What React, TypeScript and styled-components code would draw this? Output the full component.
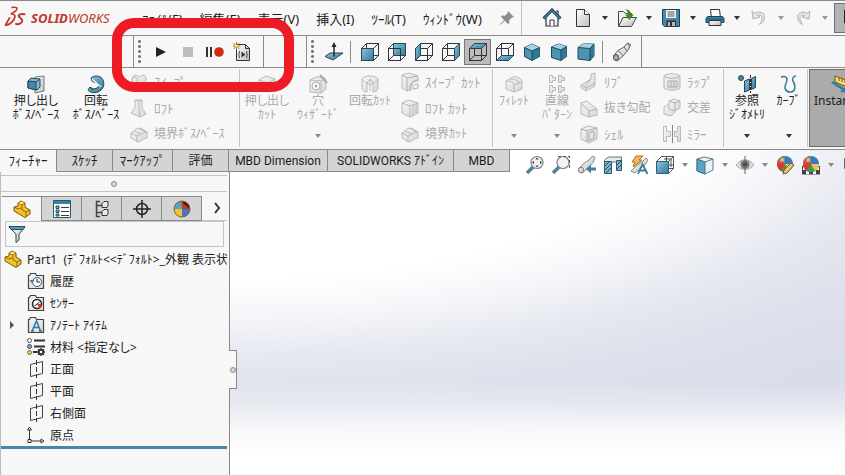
import React from "react";
import styled, { createGlobalStyle } from "styled-components";

const Global = createGlobalStyle`
  * { box-sizing: border-box; }
  body {
    margin: 0;
    background: #f7f7f7;
    color: #1c1c1c;
    font-family: "Noto Sans", "Noto Sans CJK JP", sans-serif;
    font-size: 12px;
    overflow: hidden;
  }
  button, input {
    font: inherit;
    color: inherit;
    border: 0;
    padding: 0;
    margin: 0;
    background: none;
  }
  svg { display: block; flex: none; }
`;

/* ---------- icons ---------- */

const OUT = "#2f4450";
const BLUE = "url(#gBlue)";
const GREY = "url(#gGrey)";

const Defs = styled.svg`
  position: absolute;
  width: 0;
  height: 0;
`;

const IconDefs = () => (
  <Defs aria-hidden="true">
    <defs>
      <linearGradient id="gBlue" x1="0" y1="0" x2="1" y2="1">
        <stop offset="0" stopColor="#8cc3da" />
        <stop offset="1" stopColor="#2f7a9d" />
      </linearGradient>
      <linearGradient id="gGrey" x1="0" y1="0" x2="1" y2="1">
        <stop offset="0" stopColor="#ffffff" />
        <stop offset="1" stopColor="#bdbdbd" />
      </linearGradient>
      <linearGradient id="gPale" x1="0" y1="0" x2="1" y2="1">
        <stop offset="0" stopColor="#f6f6f6" />
        <stop offset="1" stopColor="#d8d8d8" />
      </linearGradient>
    </defs>
  </Defs>
);

type IconProps = { w?: number; h?: number; children: React.ReactNode };
const Icon = ({ w = 20, h = 20, children }: IconProps) => (
  <svg width={w} height={h} viewBox={`0 0 ${w} ${h}`} fill="none" aria-hidden="true">
    {children}
  </svg>
);

const Caret = ({ color = "#333" }: { color?: string }) => (
  <Icon w={6} h={4}>
    <path d="M0 0h6L3 4z" fill={color} />
  </Icon>
);

const LogoMark = () => (
  <svg width="22" height="24" viewBox="0 0 22 24" fill="none" stroke="#c0362c" strokeLinecap="round" strokeLinejoin="round" aria-hidden="true">
    <path d="M8 1.500c2.500-.6 5.500-.2 5 1.300C12.500 4.500 10 6.500 7.500 7.500" strokeWidth="1.500" />
    <path d="M7.500 7.800c3.500.2 4.200 2.500 2.700 5.200C8.500 16 5 18.800 1.500 19.200L5.500 12" strokeWidth="1.700" />
    <path d="M20.500 8.300c-3.500-.8-6.200.2-5.700 2 .4 1.400 3.600 2.200 3.400 4.700-.3 2.600-3.700 3.500-6.200 3" strokeWidth="2" />
  </svg>
);

const PinIcon = () => (
  <Icon w={16} h={16}>
    <path d="M9 1l6 6-2 .5-2.800 2.700.1 3-1.300.8-3.300-3.300L2 14.500 1 15l.5-1L5 10 2 6.800l1-1.200 3 .1L8.700 3z" fill="#8d8d8d" />
  </Icon>
);
const HomeIcon = () => (
  <Icon>
    <path d="M4 9v9h12V9l-6-6z" fill="#f4f4f4" stroke="#333" strokeWidth="1.200" />
    <path d="M8 18v-6h4v6" stroke="#333" fill="#fff" />
    <path d="M14 3h2v4" stroke="#333" strokeWidth="1.200" />
    <path d="M1.500 10.500L10 2l8.500 8.500" stroke="#17445a" strokeWidth="3" />
    <path d="M2 10.300L10 2.300l8 8" stroke="#6fb0c8" strokeWidth="1" />
  </Icon>
);
const NewIcon = () => (
  <Icon>
    <path d="M3.500 1.500h8l5 5v12h-13z" fill={GREY} stroke="#333" />
    <path d="M11.500 1.500v5h5" fill="#fff" stroke="#333" />
  </Icon>
);
const OpenIcon = () => (
  <Icon w={22}>
    <path d="M2.500 18V3.500h5l2 2h6V10" fill="#eee" stroke="#444" />
    <path d="M2.500 18.500L7 9.500h13.500l-5 9z" fill={GREY} stroke="#444" />
    <path d="M9 1.500c4-.5 6 2 6 5h3L13.300 12 9 6.500h3C12 4 11 2.500 9 1.500z" fill="#3d8a1e" />
  </Icon>
);
const SaveIcon = () => (
  <Icon>
    <path d="M1.500 1.500h17v17h-15l-2-2z" fill="#4389a8" stroke="#1d4456" />
    <rect x="5" y="2" width="10" height="8" fill="#f4f4f4" />
    <path d="M6.500 4h7M6.500 6h7M6.500 8h7" stroke="#555" />
    <path d="M5.500 12.500h9.500v6H5.500z" fill="#333" />
    <path d="M7 14h2v4H7zM11 14h3v4h-3z" fill="#bbb" />
  </Icon>
);
const PrintIcon = () => (
  <Icon>
    <path d="M6.500 10L5.500 1.500h9l1 8.500" fill="#fff" stroke="#333" />
    <path d="M2.500 8.500h15l1.500 2v4H1v-4z" fill="#3a86a8" stroke="#16455b" />
    <path d="M4 12.500h12v5H4z" fill={GREY} stroke="#333" />
    <path d="M1 11h18" stroke="#17546e" />
  </Icon>
);
const UndoIcon = () => (
  <Icon w={18}>
    <path d="M2 3l1 8 7-2-2.700-1.600c4-1.400 6.200 2 3.700 6.600l-1.500 2.500c6-2.500 7.500-12-.5-12.500-1.500 0-3 .5-4.200 1.500z" fill="#e4e4e4" stroke="#b5b5b5" />
  </Icon>
);
const RedoIcon = () => (
  <Icon w={18}>
    <path d="M16 3l-1 8-7-2 2.700-1.600C6.700 6 4.500 9.400 7 14l1.500 2.500C2.500 14 1 4.500 9 4c1.500 0 3 .5 4.200 1.500z" fill="#e4e4e4" stroke="#b5b5b5" />
  </Icon>
);
const CursorIcon = () => (
  <Icon w={12}>
    <path d="M1.500 2v13l3.500-3 2 5 2-1-2-5h4z" fill="#fff" stroke="#222" />
  </Icon>
);

const PlayIcon = () => (<Icon w={12} h={12}><path d="M1 1l10 5-10 5z" fill="#222" /></Icon>);
const StopIcon = () => (<Icon w={12} h={12}><path d="M1 1h10v10H1z" fill="#bdbdbd" /></Icon>);
const PauseRecIcon = () => (
  <Icon w={20} h={12}>
    <path d="M2 1v10M6 1v10" stroke="#333" strokeWidth="2" />
    <circle cx="14" cy="6" r="4.800" fill="#cf2a10" />
  </Icon>
);
const ScriptIcon = () => (
  <Icon w={18}>
    <path d="M3.500 2.500h9l4 4v12h-13z" fill={GREY} stroke="#333" />
    <path d="M12.500 2.500v4h4" stroke="#333" />
    <path d="M7 9c-1.500 0 0 3.300-1.500 3.600C7 12.900 5.500 16 7 16M13 9c1.500 0 0 3.300 1.500 3.600C13 12.900 14.500 16 13 16" stroke="#333" />
    <path d="M8.500 9.500l4 3-4 3z" fill="#333" />
    <path d="M3.500 0v8M0 4h7.500M.8 1.200l5.400 5.600M6.200 1.200L.8 6.800" stroke="#9a6a1c" />
    <circle cx="3.500" cy="4" r="1.600" fill="#ffd98a" />
  </Icon>
);

const NormalToIcon = () => (
  <Icon>
    <path d="M1 14.500l5-3.500h13l-5 3.500-5 3.500z" fill={BLUE} stroke={OUT} />
    <path d="M10 14.500V4" stroke="#222" strokeWidth="1.500" />
    <path d="M7.500 5L10 0l2.500 5z" fill="#222" />
  </Icon>
);

const faces = {
  front: "M1.500 6.500h12v12h-12z",
  back: "M6.500 1.500h12v12h-12z",
  left: "M1.500 6.500l5-5v12l-5 5z",
  right: "M13.500 6.500l5-5v12l-5 5z",
  top: "M1.500 6.500l5-5h12l-5 5z",
  bottom: "M1.500 18.500l5-5h12l-5 5z",
};
const CubeIcon = ({ face }: { face: keyof typeof faces }) => (
  <Icon>
    <path d="M6.500 1.500h12v12h-12zM1.500 6.500l5-5M13.500 6.500l5-5M1.500 18.500l5-5M13.500 18.500l5-5M1.500 6.500h12v12h-12z" stroke="#333" />
    <path d={faces[face]} fill={BLUE} stroke="#24485a" />
    {face === "back" && <path d="M1.500 6.500h12v12h-12z" stroke="#333" />}
  </Icon>
);
const IsoIcon = () => (
  <Icon>
    <path d="M10 2l7.500 3.500v9L10 18.500l-7.500-4v-9z" fill="#4c94b4" stroke="#1d4759" />
    <path d="M2.500 5.500L10 2l7.500 3.500L10 9z" fill="#a5d3e4" />
    <path d="M10 9l7.500-3.500v9l-7.500 4z" fill="#2e7797" />
    <path d="M2.500 5.500L10 9l7.500-3.500M10 9v9" stroke="#1d4759" />
  </Icon>
);
const TrimetricIcon = () => (
  <Icon>
    <path d="M2.500 5l7-3 8 2.500v10l-5.500 4-9.500-3z" fill="#4c94b4" stroke="#1d4759" />
    <path d="M2.500 5l7-3 8 2.500-5.500 3.500z" fill="#a5d3e4" />
    <path d="M12 8l5.500-3.500v10l-5.500 4z" fill="#2e7797" />
    <path d="M2.500 5L12 8l5.500-3.500M12 8v10.500" stroke="#1d4759" />
  </Icon>
);
const DimetricIcon = () => (
  <Icon>
    <path d="M2 5.500L7 2h11v12l-4 4.500L2 17z" fill="#4c94b4" stroke="#1d4759" />
    <path d="M2 5.500L7 2h11l-4 4.500z" fill="#a5d3e4" />
    <path d="M14 6.500L18 2v12l-4 4.500z" fill="#2e7797" />
    <path d="M2 5.500l12 1L18 2M14 6.500v12" stroke="#1d4759" />
  </Icon>
);
const ScopeIcon = () => (
  <Icon>
    <path d="M1.500 14L6 8.500 12 5l3.500-4 3 1.500-2 5L12 13l-6.500 6z" fill={GREY} stroke="#666" />
    <path d="M12 5l3 4M6 8.500l5 5M15.500 1.500l2.500 3" stroke="#666" />
    <ellipse cx="4" cy="15.500" rx="2.500" ry="3" fill="#aaa" stroke="#444" />
  </Icon>
);

/* ribbon */
const ExtrudeIcon = () => (
  <Icon>
    <path d="M9 3l9-1v15l-9 2z" fill={GREY} stroke="#777" />
    <path d="M2 7l3-3 9 1v8l-3 3-9-2z" fill="#7db9d2" stroke={OUT} />
    <path d="M2 7l8 1v8l-8-2z" fill="#3f89aa" stroke={OUT} />
    <path d="M10 8l4-3" stroke={OUT} />
  </Icon>
);
const RevolveIcon = () => (
  <Icon>
    <path d="M5 4c3-3 10-3 12 2s0 10-5 12c-4 1.500-8 .5-10-2l2-3c3 2.500 7 2 8.500-.5S12 8 9 8.500L6 7z" fill={BLUE} stroke={OUT} />
    <path d="M6 5l9 8" stroke="#e8f4f8" strokeWidth="1.500" />
    <path d="M4 13l3 3.500" stroke={OUT} />
  </Icon>
);
const dim = { stroke: "#b9b9b9", fill: "url(#gPale)" };
const SweepIcon = () => (
  <Icon><path {...dim} d="M3 8c0-5 5-6 8-3 3-4 7-1 6 3-1 4-6 3-7 8-4 2-8 0-7-3 3-1 1-3 0-5z" /><circle cx="6" cy="8" r="3" {...dim} /></Icon>
);
const LoftIcon = () => (
  <Icon><path {...dim} d="M6 2h7v8l4 6-6 3-9-4 4-5z" /><path d="M6 2l4 1.500L13 2M10 3.500V11l1 8" stroke="#b9b9b9" /></Icon>
);
const BoundaryIcon = () => (
  <Icon><path {...dim} d="M2 9c3-1 4-5 8-5l3 1 5 3v6c-4 0-5 3-9 4l-7-4z" /><path d="M2 9l6 3c4-1 6-4 10-4M8 12v6M5 7l7 3M10 4l6 4" stroke="#b9b9b9" /></Icon>
);
const CutExtrudeIcon = () => (
  <Icon><path {...dim} d="M2 6l7-4 9 3v9l-7 4-9-3z" /><path d="M2 6l9 3 7-4M11 9v9M5 9l3 1v4l-3-1z" stroke="#b9b9b9" /></Icon>
);
const HoleIcon = () => (
  <Icon><path {...dim} d="M2 6l6-3h7l3 3v9l-5 4-11-1z" /><path d="M2 6l11 1 5-3M13 7v12" stroke="#b9b9b9" /><circle cx="8" cy="12" r="4" fill="#fff" stroke="#aaa" /><circle cx="8" cy="12" r="1.500" fill="#aaa" /><path d="M12 1l7 8" stroke="#aaa" strokeWidth="2" /></Icon>
);
const CutRevolveIcon = () => (
  <Icon><path {...dim} d="M2 5c3-4 13-4 16 0v10c-1 2-3 3-5 3V9l-3-4-3 4v9c-2 0-4-1-5-3z" /><path d="M7 9l3 2 3-2M10 5v6M10 11v6M2 5c1 2 3 3.500 5 4M18 5c-1 2-3 3.500-5 4" stroke="#b9b9b9" /></Icon>
);
const CutSweepIcon = () => (
  <Icon><path {...dim} d="M2 3l7-2 9 3v5c-5 0-7 4-7 9l-4 1-5-3z" /><path d="M2 3l5 3 11-2M7 6v13M10 18c-1-6 3-10 8-10M13 17c0-4 2-5 5-5v4z" stroke="#b0b0b0" /></Icon>
);
const CutLoftIcon = () => (
  <Icon><path {...dim} d="M2 5l7-3 9 3v10l-8 4-8-4z" /><path d="M2 5l8 3 8-3M10 8v11M13 7v10M16 6v9" stroke="#b9b9b9" /></Icon>
);
const FilletIcon = () => (
  <Icon><path {...dim} d="M2 7l7-4c4-1 9 1 9 5v7l-8 3-8-3z" /><path d="M2 7c5 0 8 1 8 4v7M10 11l8-3M6 5c5 0 8 1 9 4" stroke="#b9b9b9" /></Icon>
);
const PatternIcon = () => (
  <Icon>
    {[0, 10].map((y) => (
      <path
        key={y}
        d={`M2.500 ${y + 1.500}h3v2h3v3h-3v2h-3zM11.500 ${y + 1.500}h3v2h3v3h-3v2h-3z`}
        {...dim}
      />
    ))}
  </Icon>
);
const RibIcon = () => (
  <Icon><path {...dim} d="M2 13l10-6V2l4-1v13l-9 5-5-3z" /><path d="M2 13l5 3 9-5M12 7l-6 7M7 16v3" stroke="#b0b0b0" /></Icon>
);
const DraftIcon = () => (
  <Icon><path {...dim} d="M2 5l6-2 10 8v6l-8 2-8-3z" /><path d="M2 5l8 8 8-2M10 13v6" stroke="#b0b0b0" /></Icon>
);
const ShellIcon = () => (
  <Icon><path {...dim} d="M2 5l7-3 9 2v11l-8 4-8-4z" /><path d="M2 5l6 2 10-3M8 7v11M10 9l5-2v7l-5 3z" stroke="#aaa" /></Icon>
);
const WrapIcon = () => (
  <Icon><path {...dim} d="M2 4c3-3 13-3 16 0v12c-3 3-13 3-16 0z" /><path d="M2 4c3 3 13 3 16 0M6 9h9v6H6zM9 9v6M12 9v6" stroke="#aaa" /></Icon>
);
const IntersectIcon = () => (
  <Icon><path {...dim} d="M2 9l5-3h6v8l-4 4-7-2z" /><path {...dim} d="M7 3l5-2 6 2v7l-5 3-6-2z" /><path d="M7 3l6 2 5-2M13 5v8" stroke="#b0b0b0" /></Icon>
);
const MirrorIcon = () => (
  <Icon>
    <path d="M1.500 2.500h3v5h4v5h-4v5h-3zM18.500 2.500h-3v5h-3v5h3v5h3z" {...dim} />
    <path d="M10.500 1v18" stroke="#888" />
  </Icon>
);
const RefGeomIcon = () => (
  <Icon>
    <circle cx="4" cy="4" r="2.500" fill="#4389a8" stroke={OUT} />
    <path d="M7.500 7l5-2v11l-5 2zM14.500 4.500l4-2v11l-4 2z" fill={BLUE} stroke={OUT} />
    <path d="M13.500 1v18" stroke="#222" strokeDasharray="3 1" />
  </Icon>
);
const CurveIcon = () => (
  <Icon><path d="M2 3c6-2 7 2 5 6-2 5-1 9 4 9 7 0 5-8 3-11-1-2 0-5 3-5" stroke="#2f7a9d" strokeWidth="1.500" /></Icon>
);
const InstantIcon = () => (
  <Icon w={24}>
    <path d="M5 2l17 6v7L5 8z" fill="#ffd773" stroke="#6b5310" />
    <path d="M9 4v3M12 5v3M15 6v3M18 7v3" stroke="#6b5310" />
    <path d="M1 9l11 7-2 2 9 1-3-7-2 2L3 7z" fill="#3a7f9e" />
  </Icon>
);

/* view toolbar */
const lens = (
  <>
    <path d="M2 18l6-6" stroke="#4b8299" strokeWidth="3.500" />
    <circle cx="12" cy="7.500" r="6" fill="#f1f3f5" stroke="#7b858b" strokeWidth="1.200" />
  </>
);
const ZoomFitIcon = () => (
  <Icon>{lens}<path d="M12 2.500l1.700 2h-3.400zM12 12.500l1.700-2h-3.400zM7 7.500l2-1.700v3.400zM17 7.500l-2-1.700v3.400z" fill="#444" /></Icon>
);
const ZoomAreaIcon = () => (<Icon>{lens}<path d="M7 1.500h11.500v12" stroke="#555" strokeDasharray="3 2" /></Icon>);
const PrevViewIcon = () => (
  <Icon>
    <path d="M1.500 14L6 9l6-4 3.500-4L18 2.500l-2 5L12 12l-6.500 6z" fill={GREY} stroke="#888" />
    <ellipse cx="4" cy="15" rx="2.500" ry="2.800" fill="#ddd" stroke="#777" />
    <path d="M19 12.500h-5V9.500l-5 4.500 5 4.500v-3h5z" fill="#417f9c" />
  </Icon>
);
const SectionIcon = () => (
  <Icon>
    <path d="M1.500 5l4-3h13v13h-5V7h-5v11h-7z" fill="#e4eaed" stroke="#62757e" />
    <path d="M1.500 6.500h7v12h-7zM13.500 5.500h5v10h-5z" fill="#7ab4cc" stroke="#34586a" />
    <path d="M2 11l4-4M2 15l6-6M3 18l5-5M14 10l4-4M14 14l4-4" stroke="#1e4d62" />
  </Icon>
);
const DynamicIcon = () => (
  <Icon>
    <path d="M7 1h7l-4 4h3L4 12l2-5H3z" fill="#f5b85a" stroke="#a9752a" />
    <path d="M2 16l5-5 7-5 3-3 2 2-3 5-4 3-6 5z" fill={GREY} stroke="#888" />
    <path d="M9 19l4.500-10L18.500 19M11 15.500h5.500" stroke="#3c7e9b" strokeWidth="1.800" />
  </Icon>
);
const OrientIcon = () => (
  <Icon>
    <path d="M6.500 1.500h12v12h-5v-7h-12z" fill="#fafafa" stroke="#555" />
    <path d="M1.500 6.500l5-5M13.500 6.500l5-5M13.500 18.500l5-5M11.500 2v4M14 10h4M9 4h7v8" stroke="#555" />
    <path d="M1.500 6.500h12v12h-12z" fill={BLUE} stroke="#2f5f75" />
  </Icon>
);
const DisplayIcon = () => (
  <Icon>
    <path d="M2 4l7-2 9 2v11l-8 4-8-3z" fill="#e8f2f6" stroke="#5f7c88" />
    <path d="M2 4l8 3v12l-8-3z" fill="#5ca3c1" stroke="#41768c" />
    <path d="M2 4l8 3 8-3" stroke="#5f7c88" />
  </Icon>
);
const EyeIcon = () => (
  <Icon>
    <path d="M1 10c5-7 13-7 18 0-5 6-13 6-18 0z" fill="#ddd" stroke="#aaa" />
    <circle cx="10" cy="9.500" r="4.500" fill="#777" /><circle cx="10" cy="9.500" r="2" fill="#333" />
    <path d="M10 1v18" stroke="#666" />
  </Icon>
);
const ball = (
  <>
    <circle cx="10" cy="9" r="8" fill="#3b77c5" />
    <path d="M10 9V1a8 8 0 0 0-8 8z" fill="#d94a3c" />
    <path d="M10 9H2a8 8 0 0 0 5 7.400z" fill="#cd3e36" />
    <path d="M10 9l-4 7a8 8 0 0 0 8 0z" fill="#3f9a4b" />
    <path d="M10 9l4 7a8 8 0 0 0 4-7z" fill="#ecc34f" />
    <path d="M10 9V1a8 8 0 0 0-4 1.200z" fill="#5aa84e" />
    <circle cx="7" cy="5" r="2" fill="#fff" opacity=".5" />
  </>
);
const AppearanceIcon = () => (
  <Icon>{ball}<path d="M8 19l1-4 7-7 3 2-7 8z" fill="#f1c078" stroke="#715124" /></Icon>
);
const SceneIcon = () => (
  <Icon>
    <path d="M1 11h18v8.500H1z" fill="#444" />
    <path d="M2 12h3v3H2zM15 12h3v3h-3zM5 16h3v3H5zM12 16h3v3h-3z" fill="#fff" />
    {ball}
    <path d="M5 17h3v2H5zM12 17h3v2h-3z" fill="#fff" />
  </Icon>
);
const MonitorIcon = () => (<Icon><path d="M3.500 3.500h15v10h-15z" fill="#eee" stroke="#666" /></Icon>);

/* feature manager */
const PartIcon = () => (
  <Icon w={18} h={18}>
    <path d="M5 3l3-2 4 2v4l5 3v4l-5 3.500L1 11V7l4-1z" fill="#f3c22f" stroke="#7c5a07" />
    <path d="M5 3l4 2v5l4 2 4-2M9 5l3-2M13 12v5M1 7l4 2 3-1" stroke="#8f6a0c" />
    <path d="M5.500 3l3-1.500L11 3 9 4.500z" fill="#ffe58a" />
  </Icon>
);
const PropertyIcon = () => (
  <Icon w={18} h={18}>
    <path d="M.5.500h17v17H.5z" fill="#fff" stroke="#2f5666" />
    <path d="M1 1h16v3H1z" fill="#3b84a3" />
    <path d="M3 6h3v2.500H3zM3 10h3v2.500H3zM3 14h3v2H3z" fill="#5aa0bd" stroke="#2f5666" />
    <path d="M8 7.500h8M8 11.500h8M8 15.500h8" stroke="#2f3f48" />
  </Icon>
);
const ConfigIcon = () => (
  <Icon w={16} h={18}>
    <path d="M2.500 1v16M2.500 5.500H8M2.500 12.500H8M2 1.500h4M2 16.500h4" stroke="#444" strokeWidth="1.500" />
    <path d="M8 3.500l2-2h4v4l-1 2H8zM8 11.500l2-2h4v4l-1 2H8z" fill="#e9e9e9" stroke="#333" />
  </Icon>
);
const TargetIcon = () => (
  <Icon w={18} h={18}>
    <circle cx="9" cy="9" r="5.500" stroke="#222" strokeWidth="1.500" />
    <path d="M9 0v18M0 9h18" stroke="#222" strokeWidth="1.500" />
  </Icon>
);
const DisplayMgrIcon = () => (
  <Icon w={18} h={18}>
    <circle cx="9" cy="9" r="8" fill="#efc62f" />
    <path d="M9 9L1 9a8 8 0 0 1 8-8z" fill="#5c9be0" />
    <path d="M9 9L5 2a8 8 0 0 1 4-1z" fill="#6aa84f" />
    <path d="M9 9V1a8 8 0 0 1 8 8z" fill="#c9342b" />
    <path d="M9 9v8a8 8 0 0 0 8-8z" fill="#3f78c4" />
    <path d="M8 1.200l8 7c.5-2-1-6-8-7z" fill="#222" />
    <circle cx="9" cy="9" r="8" stroke="#8a5a46" strokeWidth="1" />
  </Icon>
);
const FilterIcon = () => (
  <Icon w={18} h={18}>
    <path d="M1 2h16l-6 7v6l-3 2.500V9z" fill={GREY} stroke="#2d4753" />
    <path d="M1 1.500h16l-2 3H3z" fill="#4d9cbd" stroke="#24505f" />
  </Icon>
);
const folder = <path d="M1.500 16.500v-13h1l1-2h5l1 2h7v13z" fill="url(#gPale)" stroke="#444" strokeWidth="1.200" />;
const HistoryIcon = () => (
  <Icon w={18} h={18}>{folder}<circle cx="10" cy="10" r="4.500" fill="#fff" stroke="#39596a" /><path d="M10 7v3h3" stroke="#222" /><path d="M2.500 8h5L5 11.500z" fill="#3a86a8" /></Icon>
);
const SensorIcon = () => (
  <Icon w={18} h={18}>{folder}<circle cx="10" cy="10" r="4.500" fill="#fff" stroke="#222" strokeWidth="1.500" /><path d="M10 10l2.500 4.500A5 5 0 0 0 14.500 10z" fill="#d33c2f" /><path d="M7.500 12l5-4" stroke="#222" /></Icon>
);
const AnnotIcon = () => (
  <Icon w={18} h={18}>{folder}<path d="M5 15l4.500-10L13.500 15M6.500 11.500h6M4 15h3M12 15h3" stroke="#2f7a9d" strokeWidth="1.500" /></Icon>
);
const MaterialIcon = () => (
  <Icon w={18} h={18}>
    <path d="M7 2.500h11M7 8.500h11M6 14h4" stroke="#333" strokeWidth="2" />
    <circle cx="2.500" cy="2.500" r="2" fill="#fff" stroke="#555" />
    <circle cx="2.500" cy="8.500" r="2" fill="#7fb6e0" stroke="#345" />
    <circle cx="2.500" cy="14.500" r="2" fill="#f3d33f" stroke="#765" />
    <circle cx="14" cy="14" r="2.300" stroke="#333" strokeWidth="2" />
    <path d="M14 10v1.500M14 16.500V18M10 14h1.500M16.500 14H18M11.200 11.200l1 1M15.800 15.800l1 1M16.800 11.200l-1 1M12.200 15.800l-1 1" stroke="#333" strokeWidth="1.300" />
  </Icon>
);
const PlaneIcon = () => (
  <Icon w={18} h={18}>
    <path d="M3.500 4.500l12-3v12l-12 3z" stroke="#444" />
    <path d="M9.500 0v18" stroke="#333" strokeDasharray="5 2" />
  </Icon>
);
const OriginIcon = () => (
  <Icon w={18} h={18}>
    <path d="M2.500 3v12h12" stroke="#333" />
    <path d="M.5 4l2-3 2 3zM14 13l3 2-3 2zM1 13.500h3v3H1z" fill="#fff" stroke="#333" />
  </Icon>
);

/* ---------- layout ---------- */

const Page = styled.div`
  position: relative;
  display: flex;
  flex-direction: column;
  min-height: 100vh;
  overflow: hidden;
  border-top: 1px solid #8a8a8a;
  white-space: nowrap;
`;
const MenuBar = styled.header`
  display: flex;
  height: 35px;
  border-bottom: 1px solid #8a8a8a;
`;
const Brand = styled.div`
  display: flex;
  align-items: center;
  gap: 5px;
  width: 142px;
  padding-left: 4px;
  flex: none;
  color: #c0362c;
  font: italic 13px "Noto Sans", sans-serif;
`;
const Menus = styled.nav`
  display: flex;
  align-items: center;
  gap: 17px;
  font-size: 13px;
  width: 379px;
  flex: none;
`;
const QuickTools = styled.div`
  display: flex;
  align-items: center;
  padding-left: 17px;
  border-left: 1px solid #c4c4c4;
`;
const Tool = styled.button<{ $w?: number; $on?: boolean }>`
  display: flex;
  align-items: center;
  justify-content: center;
  flex: none;
  width: ${(p) => p.$w ?? 26}px;
  height: 26px;
  ${(p) => p.$on && "background: #bcbcbc; border: 1px solid #777;"}
`;
const HomeTool = styled(Tool)`
  margin-right: 5px;
`;
const SelectTool = styled.button`
  display: flex;
  align-items: center;
  align-self: stretch;
  margin: 2px 0;
  padding-left: 8px;
  width: 30px;
  flex: none;
  background: #b3b3b3;
  border: 1px solid #707070;
`;
const ToolBand = styled.div`
  display: flex;
  height: 32px;
  padding-left: 133px;
  border-bottom: 1px solid #8a8a8a;
`;
const ToolGroup = styled.div<{ $pad?: number }>`
  display: flex;
  align-items: center;
  border: solid #8a8a8a;
  border-width: 0 1px;
  padding-right: ${(p) => p.$pad ?? 6}px;
  & + & { margin-left: 42px; }
`;
const Grip = styled.div`
  width: 3px;
  height: 25px;
  margin: 0 6px 0 4px;
  background: radial-gradient(circle, #777 1px, transparent 2px) 0 0 / 3px 5px;
`;
const Divider = styled.div`
  width: 1px;
  height: 22px;
  margin: 0 5px 0 3px;
  background: #8a8a8a;
`;
const Ribbon = styled.div`
  display: flex;
  height: 82px;
  padding-top: 1px;
  border-bottom: 1px solid #8a8a8a;
`;
const RibbonGroup = styled.div<{ $w: number; $pad?: number }>`
  display: flex;
  flex: none;
  width: ${(p) => p.$w}px;
  height: 78px;
  padding-left: ${(p) => p.$pad ?? 0}px;
  border-right: 1px solid #c2c2c2;
`;
const BigButton = styled.button<{ $w: number; $off?: boolean }>`
  display: flex;
  flex-direction: column;
  align-items: center;
  flex: none;
  width: ${(p) => p.$w}px;
  padding-top: 5px;
  color: ${(p) => (p.$off ? "#a9a9a9" : "#1c1c1c")};
  & > svg:last-child:not(:first-child) { margin-top: auto; margin-bottom: 9px; }
`;
const Line = styled.span<{ $size?: number }>`
  line-height: 14px;
  font-size: ${(p) => p.$size ?? 12}px;
  font-feature-settings: "palt";
  white-space: pre;
  text-align: center;
`;
const SmallColumn = styled.div<{ $w: number; $pad: number }>`
  display: flex;
  flex-direction: column;
  flex: none;
  width: ${(p) => p.$w}px;
  padding-left: ${(p) => p.$pad}px;
`;
const SmallButton = styled.button`
  display: flex;
  align-items: center;
  gap: 5px;
  height: 26px;
  color: #a9a9a9;
  font-size: 12px;
`;
const InstantButton = styled.button`
  flex: 1 0 70px;
  display: flex;
  flex-direction: column;
  align-items: flex-start;
  height: 78px;
  margin-left: 1px;
  padding: 4px 0 0 4px;
  background: #ababab;
  border: 1px solid #6c6c6c;
  & > svg { margin-left: 16px; }
`;

const Body = styled.div`
  flex: 1;
  display: flex;
  flex-direction: column;
  background:
    linear-gradient(to bottom, rgba(255,255,255,0) 71%, rgba(255,255,255,.3) 78%, rgba(255,255,255,.75) 85%, #fff 93%),
    radial-gradient(ellipse 80% 78% at 27% -15%, #fff 70%, #f5f6f9 85%, #e5e8f0 101%, #dfe2ec 114%, #d9dce9 137%);
`;
const TabRow = styled.div`
  display: flex;
  height: 22px;
`;
const Tabs = styled.div`
  display: flex;
  flex: none;
  width: 522px;
`;
const Tab = styled.button<{ $w: number; $on?: boolean; $kana?: boolean }>`
  width: ${(p) => p.$w}px;
  height: 22px;
  flex: none;
  font-family: Roboto, "Noto Sans CJK JP", sans-serif;
  font-size: ${(p) => (p.$kana ? 13 : 12)}px;
  line-height: 20px;
  background: ${(p) => (p.$on ? "#f7f7f7" : "#d4d4d4")};
  border: solid #8a8a8a;
  border-width: ${(p) => (p.$on ? "0 1px 0 0" : "0 1px 1px 0")};
`;
const HudBar = styled.div`
  display: flex;
  align-items: center;
  padding-top: 8px;
`;
const Work = styled.div`
  flex: 1;
  display: flex;
`;
const Side = styled.aside`
  position: relative;
  display: flex;
  flex-direction: column;
  width: 230px;
  flex: none;
  padding-right: 2px;
  background: #f7f7f7;
  border-left: 1px solid #bdbdbd;
  border-right: 1px solid #8a8a8a;
`;
const SideGrip = styled.div`
  display: flex;
  align-items: center;
  justify-content: center;
  height: 17px;
  margin-top: 3px;
  border: solid #c4c4c4;
  border-width: 1px 0;
`;
const Dot = styled.span`
  width: 6px;
  height: 6px;
  border: 1px solid #8a8a8a;
  border-radius: 50%;
  background: #d8d8d8;
`;
const PanelTabs = styled.div`
  display: flex;
  height: 25px;
  margin-top: 4px;
  padding-left: 1px;
`;
const PanelTab = styled.button<{ $on?: boolean }>`
  display: flex;
  align-items: center;
  justify-content: center;
  width: 40px;
  background: ${(p) => (p.$on ? "#f7f7f7" : "#d4d4d4")};
  border: solid #8a8a8a;
  border-width: ${(p) => (p.$on ? "1px 1px 0 0" : "1px 1px 1px 0")};
`;
const MoreTabs = styled.button`
  flex: 1;
  display: flex;
  align-items: center;
  justify-content: center;
  padding-left: 4px;
  border-bottom: 1px solid #c4c4c4;
`;
const FilterBox = styled.label`
  display: flex;
  align-items: center;
  height: 26px;
  margin: 0 3px 0 4px;
  padding-left: 2px;
  border: 1px solid #c4c4c4;
  input { flex: 1; min-width: 0; height: 22px; outline: none; }
`;
const Tree = styled.ul`
  list-style: none;
  margin: 1px 0 0;
  padding: 0;
  border-bottom: 3px solid #4a87a5;
`;
const TreeItem = styled.li<{ $root?: boolean }>`
  display: flex;
  align-items: center;
  gap: 5px;
  height: 22px;
  padding-left: ${(p) => (p.$root ? 3 : 8)}px;
  overflow: hidden;
  white-space: pre;
  font-feature-settings: ${(p) => (p.$root ? "normal" : '"palt"')};
`;
const Twist = styled.span`
  width: 13px;
  flex: none;
`;
const Handle = styled.div`
  position: absolute;
  left: 228px;
  top: 178px;
  width: 8px;
  height: 39px;
  display: flex;
  align-items: center;
  justify-content: center;
  background: #f7f7f7;
  border: 1px solid #8a8a8a;
  border-left: 0;
`;
const Viewport = styled.main`
  flex: 1;
`;
const RedFrame = styled.div`
  position: absolute;
  left: 112px;
  top: 17px;
  width: 182px;
  height: 74px;
  border: 10px solid #ed1c24;
  border-radius: 22px;
  pointer-events: none;
`;

/* ---------- data ---------- */

const menus = ["ﾌｧｲﾙ(F)", "編集(E)", "表示(V)", "挿入(I)", "ﾂｰﾙ(T)", "ｳｨﾝﾄﾞｳ(W)"];
const quick: [string, React.ReactNode, boolean][] = [
  ["New", <NewIcon />, true],
  ["Open", <OpenIcon />, true],
  ["Save", <SaveIcon />, true],
  ["Print", <PrintIcon />, true],
  ["Undo", <UndoIcon />, false],
  ["Redo", <RedoIcon />, false],
];
const views = ["front", "back", "left", "right", "top", "bottom"] as const;
const tabs: [string, number][] = [
  ["ﾌｨｰﾁｬｰ", 57],
  ["ｽｹｯﾁ", 56],
  ["ﾏｰｸｱｯﾌﾟ", 60],
  ["評価", 56],
  ["MBD Dimension", 99],
  ["SOLIDWORKS ｱﾄﾞｲﾝ", 126],
  ["MBD", 56],
];
const hud: [string, React.ReactNode, boolean][] = [
  ["Zoom to fit", <ZoomFitIcon />, false],
  ["Zoom to area", <ZoomAreaIcon />, false],
  ["Previous view", <PrevViewIcon />, false],
  ["Section view", <SectionIcon />, false],
  ["Dynamic annotation", <DynamicIcon />, false],
  ["View orientation", <OrientIcon />, true],
  ["Display style", <DisplayIcon />, true],
  ["Hide or show items", <EyeIcon />, true],
  ["Edit appearance", <AppearanceIcon />, false],
  ["Apply scene", <SceneIcon />, true],
  ["View settings", <MonitorIcon />, false],
];
const panelTabs: [string, React.ReactNode][] = [
  ["Feature tree", <PartIcon />],
  ["Properties", <PropertyIcon />],
  ["Configurations", <ConfigIcon />],
  ["Dimensions", <TargetIcon />],
  ["Display", <DisplayMgrIcon />],
];
const tree: [string, React.ReactNode, boolean?][] = [
  ["履歴", <HistoryIcon />],
  ["ｾﾝｻｰ", <SensorIcon />],
  ["ｱﾉﾃｰﾄ ｱｲﾃﾑ", <AnnotIcon />, true],
  ["材料 <指定なし>", <MaterialIcon />],
  ["正面", <PlaneIcon />],
  ["平面", <PlaneIcon />],
  ["右側面", <PlaneIcon />],
  ["原点", <OriginIcon />],
];

const isKana = (label: string) => /^[ｦ-ﾟ ]+$/.test(label);

const Small = ({ items, w, pad = 0 }: { items: [string, React.ReactNode][]; w: number; pad?: number }) => (
  <SmallColumn $w={w} $pad={pad}>
    {items.map(([label, icon]) => (
      <SmallButton key={label} disabled>
        {icon}
        <Line $size={isKana(label) ? 13 : 12}>{label}</Line>
      </SmallButton>
    ))}
  </SmallColumn>
);

export default function App() {
  return (
    <Page>
      <Global />
      <IconDefs />
      <MenuBar>
        <Brand>
          <LogoMark />
          <span><b>SOLID</b>WORKS</span>
        </Brand>
        <Menus>
          {menus.map((m) => <button key={m}>{m}</button>)}
          <button aria-label="Pin menu"><PinIcon /></button>
        </Menus>
        <QuickTools>
          <HomeTool aria-label="Home"><HomeIcon /></HomeTool>
          {quick.map(([name, icon, on]) => (
            <React.Fragment key={name}>
              <Tool aria-label={name} disabled={!on}>{icon}</Tool>
              <Tool aria-label={`${name} options`} $w={18} disabled={!on}><Caret color={on ? "#333" : "#999"} /></Tool>
            </React.Fragment>
          ))}
        </QuickTools>
        <SelectTool aria-label="Select"><CursorIcon /></SelectTool>
      </MenuBar>

      <ToolBand>
        <ToolGroup $pad={8}>
          <Grip />
          <Tool aria-label="Run macro" $w={27}><PlayIcon /></Tool>
          <Tool aria-label="Stop macro" $w={27} disabled><StopIcon /></Tool>
          <Tool aria-label="Record or pause macro" $w={27}><PauseRecIcon /></Tool>
          <Tool aria-label="New macro" $w={27}><ScriptIcon /></Tool>
        </ToolGroup>
        <ToolGroup>
          <Grip />
          <Tool aria-label="Normal to" $w={27}><NormalToIcon /></Tool>
          <Divider />
          {views.map((v) => (
            <Tool key={v} aria-label={`${v} view`} $w={27} $on={v === "top"}><CubeIcon face={v} /></Tool>
          ))}
          <Tool aria-label="Isometric view" $w={27}><IsoIcon /></Tool>
          <Tool aria-label="Trimetric view" $w={27}><TrimetricIcon /></Tool>
          <Tool aria-label="Dimetric view" $w={27}><DimetricIcon /></Tool>
          <Divider />
          <Tool aria-label="View selector" $w={27}><ScopeIcon /></Tool>
        </ToolGroup>
      </ToolBand>

      <Ribbon>
        <RibbonGroup $w={240} $pad={6}>
          <BigButton $w={60}><ExtrudeIcon /><Line>{"押し出し\nﾎﾞｽ/ﾍﾞｰｽ"}</Line></BigButton>
          <BigButton $w={60}><RevolveIcon /><Line>{"回転\nﾎﾞｽ/ﾍﾞｰｽ"}</Line></BigButton>
          <Small w={110} pad={3} items={[["ｽｲｰﾌﾟ", <SweepIcon />], ["ﾛﾌﾄ", <LoftIcon />], ["境界ﾎﾞｽ/ﾍﾞｰｽ", <BoundaryIcon />]]} />
        </RibbonGroup>
        <RibbonGroup $w={253}>
          <BigButton $w={54} $off disabled><CutExtrudeIcon /><Line>{"押し出し\nｶｯﾄ"}</Line></BigButton>
          <BigButton $w={48} $off disabled><HoleIcon /><Line>{"穴\nｳｨｻﾞｰﾄﾞ"}</Line><Caret color="#888" /></BigButton>
          <BigButton $w={56} $off disabled><CutRevolveIcon /><Line>回転ｶｯﾄ</Line></BigButton>
          <Small w={94} pad={2} items={[["ｽｲｰﾌﾟ ｶｯﾄ", <CutSweepIcon />], ["ﾛﾌﾄ ｶｯﾄ", <CutLoftIcon />], ["境界ｶｯﾄ", <BoundaryIcon />]]} />
        </RibbonGroup>
        <RibbonGroup $w={231}>
          <BigButton $w={42} $off disabled><FilletIcon /><Line>ﾌｨﾚｯﾄ</Line><Caret color="#888" /></BigButton>
          <BigButton $w={44} $off disabled><PatternIcon /><Line>{"直線\nﾊﾟﾀｰﾝ"}</Line><Caret color="#888" /></BigButton>
          <Small w={83} items={[["ﾘﾌﾞ", <RibIcon />], ["抜き勾配", <DraftIcon />], ["ｼｪﾙ", <ShellIcon />]]} />
          <Small w={60} items={[["ﾗｯﾌﾟ", <WrapIcon />], ["交差", <IntersectIcon />], ["ﾐﾗｰ", <MirrorIcon />]]} />
        </RibbonGroup>
        <RibbonGroup $w={84}>
          <BigButton $w={46}><RefGeomIcon /><Line>{"参照\nｼﾞｵﾒﾄﾘ"}</Line><Caret /></BigButton>
          <BigButton $w={37}><CurveIcon /><Line>ｶｰﾌﾞ</Line><Caret /></BigButton>
        </RibbonGroup>
        <InstantButton><InstantIcon /><Line>Instant3D</Line></InstantButton>
      </Ribbon>

      <Body>
        <TabRow>
          <Tabs>
            {tabs.map(([label, w], i) => (
              <Tab key={label} $w={w} $on={i === 0} $kana={isKana(label)}>{label}</Tab>
            ))}
          </Tabs>
          <HudBar>
            {hud.map(([name, icon, more]) => (
              <React.Fragment key={name}>
                <Tool aria-label={name}>{icon}</Tool>
                {more && <Tool aria-label={`${name} options`} $w={14}><Caret color="#888" /></Tool>}
              </React.Fragment>
            ))}
          </HudBar>
        </TabRow>
        <Work>
          <Side>
            <SideGrip><Dot /></SideGrip>
            <PanelTabs>
              {panelTabs.map(([name, icon], i) => (
                <PanelTab key={name} aria-label={name} $on={i === 0}>{icon}</PanelTab>
              ))}
              <MoreTabs aria-label="More tabs">
                <Icon w={8} h={12}><path d="M2 1l4 5-4 5" stroke="#333" strokeWidth="2" /></Icon>
              </MoreTabs>
            </PanelTabs>
            <FilterBox>
              <FilterIcon />
              <input aria-label="Filter" />
            </FilterBox>
            <Tree>
              <TreeItem $root><PartIcon />{"Part1  (ﾃﾞﾌｫﾙﾄ<<ﾃﾞﾌｫﾙﾄ>_外観 表示状"}</TreeItem>
              {tree.map(([label, icon, more]) => (
                <TreeItem key={label}>
                  <Twist>{more && <Icon w={6} h={8}><path d="M1 0l4 4-4 4z" fill="#555" /></Icon>}</Twist>
                  {icon}
                  {label}
                </TreeItem>
              ))}
            </Tree>
            <Handle><Dot /></Handle>
          </Side>
          <Viewport />
        </Work>
      </Body>
      <RedFrame />
    </Page>
  );
}
